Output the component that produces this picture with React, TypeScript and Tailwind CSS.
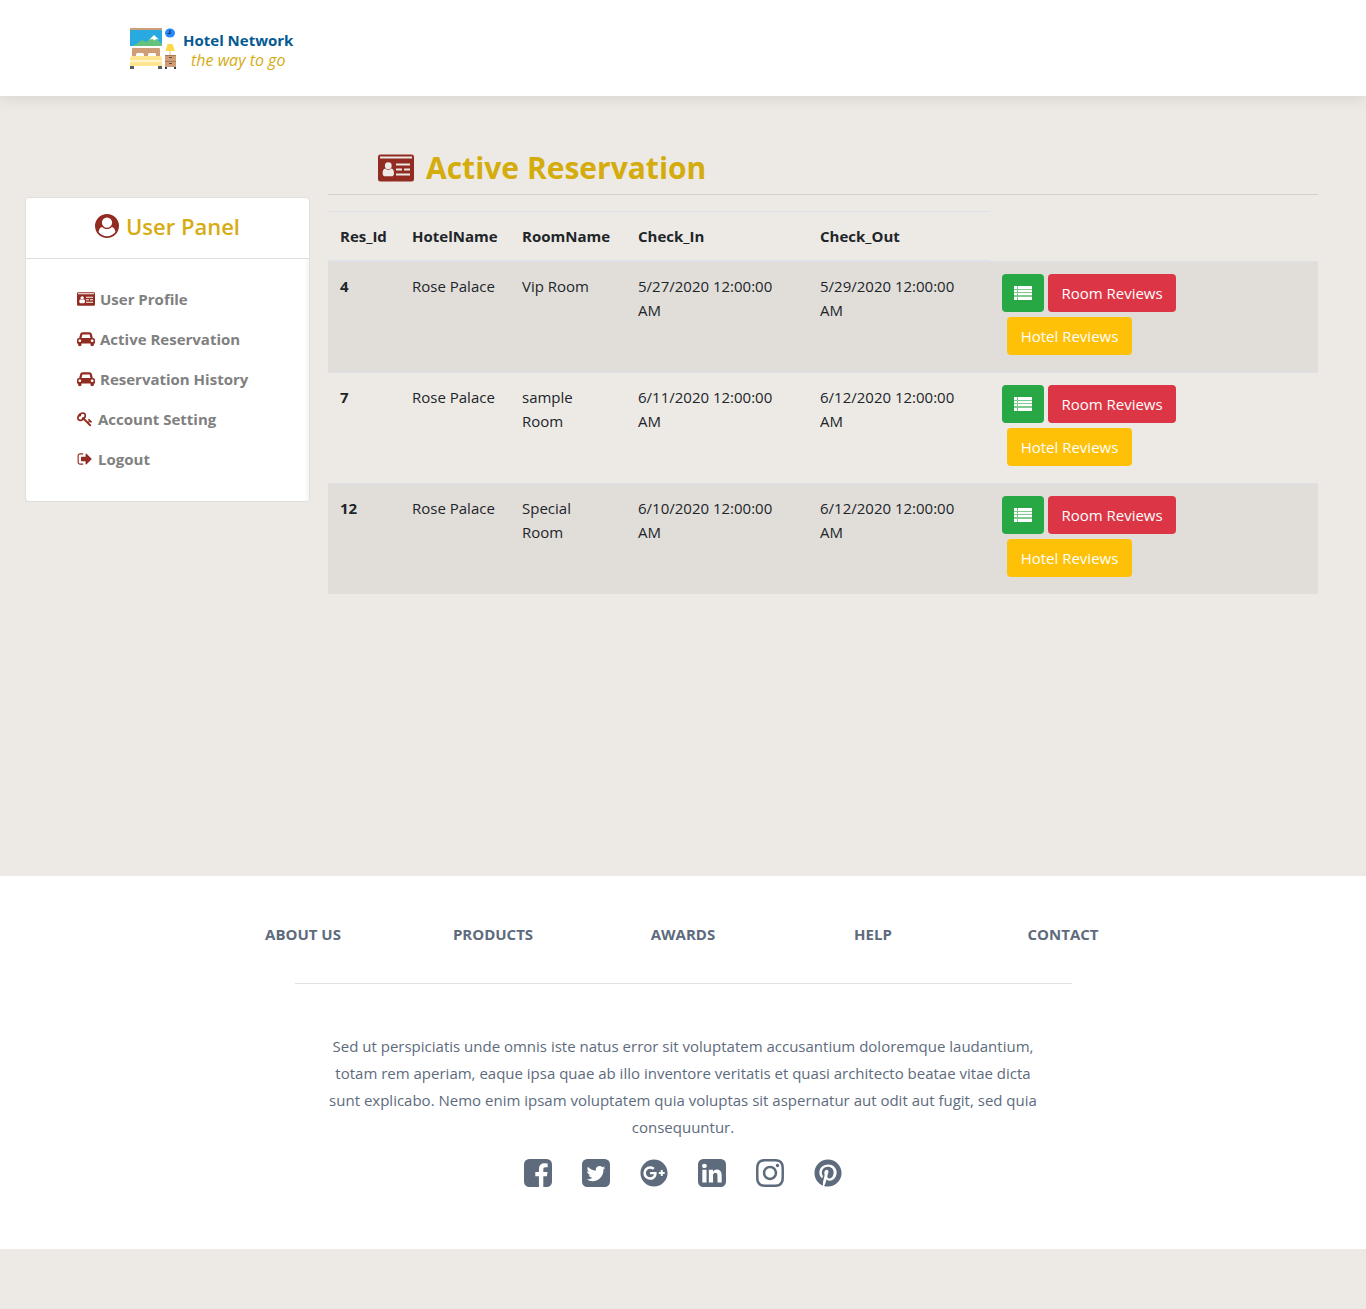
import React from 'react';
import { FaGooglePlus, FaInstagram, FaPinterest } from 'react-icons/fa';

type IconProps = { className?: string };

const Glyph = ({ box, d, className }: IconProps & { box: string; d: string }) => (
  <svg viewBox={box} fill="currentColor" className={className} aria-hidden="true">
    <path d={d} />
  </svg>
);

const CarIcon = ({ className }: IconProps) => (
  <Glyph
    className={className}
    box="0 0 2048 1792"
    d="M480 1088q0-66-47-113t-113-47-113 47-47 113 47 113 113 47 113-47 47-113zm36-320h1016l-89-357q-2-8-14-17.5t-21-9.5h-768q-9 0-21 9.5t-14 17.5zm1372 320q0-66-47-113t-113-47-113 47-47 113 47 113 113 47 113-47 47-113zm160-96v384q0 14-9 23t-23 9h-96v128q0 80-56 136t-136 56-136-56-56-136v-128h-1024v128q0 80-56 136t-136 56-136-56-56-136v-128h-96q-14 0-23-9t-9-23v-384q0-93 65.500-158.500t158.500-65.500h28l105-419q23-94 104-157.500t179-63.500h768q98 0 179 63.500t104 157.500l105 419h28q93 0 158.500 65.500t65.500 158.500z"
  />
);

const KeyIcon = ({ className }: IconProps) => (
  <Glyph
    className={className}
    box="0 0 1792 1792"
    d="M832 512q0-80-56-136t-136-56-136 56-56 136q0 42 19 83-41-19-83-19-80 0-136 56t-56 136 56 136 136 56 136-56 56-136q0-42-19-83 41 19 83 19 80 0 136-56t56-136zm851 704q0 17-49 66t-66 49q-9 0-28.500-16t-36.500-33-38.500-40-24.500-26l-96 96 220 220q28 28 28 68 0 42-39 81t-81 39q-40 0-68-28l-671-671q-176 131-365 131-163 0-265.500-102.500t-102.500-265.500q0-160 95-313t248-248 313-95q163 0 265.500 102.500t102.500 265.500q0 189-131 365l355 355 96-96q-3-3-26-24.500t-40-38.500-33-36.500-16-28.500q0-17 49-66t66-49q13 0 23 10 6 6 46 44.500t82 79.500 86.500 86 73 78 28.500 41z"
  />
);

const SignOutIcon = ({ className }: IconProps) => (
  <Glyph
    className={className}
    box="0 0 1792 1792"
    d="M704 1440q0 4 1 20t.5 26.500-3 23.500-10 19.500-20.500 6.500h-320q-119 0-203.500-84.500t-84.500-203.500v-704q0-119 84.500-203.500t203.500-84.500h320q13 0 22.500 9.500t9.500 22.500q0 4 1 20t.5 26.500-3 23.500-10 19.500-20.500 6.500h-320q-66 0-113 47t-47 113v704q0 66 47 113t113 47h312l11.500 1 11.500 3 8 5.500 7 9 2 13.500zm928-544q0 26-19 45l-544 544q-19 19-45 19t-45-19-19-45v-288h-448q-26 0-45-19t-19-45v-384q0-26 19-45t45-19h448v-288q0-26 19-45t45-19 45 19l544 544q19 19 19 45z"
  />
);

const UserCircleIcon = ({ className }: IconProps) => (
  <Glyph
    className={className}
    box="0 0 1792 1792"
    d="M1523 1339q-22-155-87.500-257.500t-184.500-118.500q-67 74-159.500 115.500t-195.500 41.500-195.500-41.500-159.500-115.500q-119 16-184.500 118.500t-87.500 257.500q106 150 271 237.500t356 87.500 356-87.500 271-237.500zm-243-699q0-159-112.500-271.500t-271.500-112.500-271.500 112.500-112.500 271.500 112.500 271.500 271.500 112.500 271.500-112.500 112.500-271.500zm512 256q0 182-71 347.500t-190.500 286-285.500 191.500-349 71q-182 0-348-71t-286-191-191-286-71-348 71-348 191-286 286-191 348-71 348 71 286 191 191 286 71 348z"
  />
);

const IdCardIcon = ({ className }: IconProps) => (
  <svg viewBox="0 0 36 28" className={className} aria-hidden="true">
    <path
      fill="currentColor"
      fillRule="evenodd"
      d="M2.500 0.500h31a2.500 2.500 0 0 1 2.500 2.500v22a2.500 2.500 0 0 1-2.500 2.500h-31a2.500 2.500 0 0 1-2.500-2.500v-22a2.500 2.500 0 0 1 2.500-2.500zM2 2.600v2h32v-2zM7.200 14.400C5.400 14.700 4.600 16.500 4.600 19.200C4.600 21.100 5.600 22.300 7 22.300H13.600C15 22.300 16 21.100 16 19.200C16 16.500 15.200 14.700 13.400 14.400A4.800 4.800 0 0 1 7.200 14.400zM10.300 8.300a3.400 3.400 0 1 0 0 6.800a3.400 3.400 0 0 0 0-6.800zM18 9.400v2h14v-2zM18 14.400v2h6v-2zM26 14.400v2h6v-2zM18 19.400v2h14v-2z"
    />
  </svg>
);

const ListIcon = ({ className }: IconProps) => (
  <svg viewBox="0 0 18 14" fill="currentColor" className={className} aria-hidden="true">
    <rect width="18" height="14" fillOpacity="0.4" />
    {[0, 4, 7, 11].map((y) => (
      <React.Fragment key={y}>
        <rect x="0" y={y} width="3" height={y === 0 || y === 11 ? 3 : 2} />
        <rect x="4" y={y} width="14" height={y === 0 || y === 11 ? 3 : 2} />
      </React.Fragment>
    ))}
  </svg>
);

const FacebookIcon = ({ className }: IconProps) => (
  <Glyph
    className={className}
    box="128 128 1536 1536"
    d="M1376 128q119 0 203.500 84.500t84.500 203.500v960q0 119-84.500 203.500t-203.500 84.500h-188v-595h199l30-232h-229v-148q0-56 23.500-84t91.500-28l122-1v-207q-63-9-178-9-136 0-217.500 80t-81.500 226v171h-200v232h200v595h-532q-119 0-203.500-84.500t-84.500-203.500v-960q0-119 84.500-203.500t203.500-84.500h960z"
  />
);

const TwitterIcon = ({ className }: IconProps) => (
  <Glyph
    className={className}
    box="128 128 1536 1536"
    d="M1408 610q-56 25-121 34 68-40 93-117-65 38-134 51-61-66-153-66-87 0-148.500 61.500t-61.500 148.500q0 29 5 48-129-7-242-65t-192-155q-29 50-29 106 0 114 91 175-47-1-100-26v2q0 75 50 133.500t123 72.500q-29 8-51 8-13 0-39-4 21 63 74.500 104t121.500 42q-116 90-261 90-26 0-50-3 148 94 322 94 112 0 210-35.500t168-95 120.500-137 75-162 24.500-168.500q0-18-1-27 63-45 105-109zm256-194v960q0 119-84.500 203.500t-203.500 84.500h-960q-119 0-203.500-84.500t-84.500-203.500v-960q0-119 84.500-203.500t203.500-84.500h960q119 0 203.500 84.500t84.500 203.500z"
  />
);

const LinkedinIcon = ({ className }: IconProps) => (
  <Glyph
    className={className}
    box="128 128 1536 1536"
    d="M365 1414h231v-694h-231v694zm246-908q-1-52-36-86t-93-34-94.500 34-36.500 86q0 51 35.500 85.500t92.500 34.500h1q59 0 95-34.500t36-85.500zm585 908h231v-398q0-154-73-233t-193-79q-136 0-209 117h2v-101h-231q3 66 0 694h231v-388q0-38 7-56 15-35 45-59.500t74-24.500q116 0 116 157v371zm468-998v960q0 119-84.500 203.500t-203.500 84.500h-960q-119 0-203.500-84.500t-84.500-203.500v-960q0-119 84.500-203.500t203.500-84.500h960q119 0 203.500 84.500t84.500 203.500z"
  />
);

const HotelLogo = () => (
  <svg viewBox="0 0 46 42" className="h-[42px] w-[46px]" aria-hidden="true">
    <rect x="0" y="0" width="32" height="2" fill="#cf9e76" />
    <rect x="0" y="2" width="32" height="16" fill="#28a9e0" />
    <path d="M3 18l9-6 4 2 7-6 9 8v2z" fill="#63c37c" />
    <path d="M19.500 11.500L24 7l5 4.500-2.500-.5-2 1.500-2-1.500z" fill="#fff" />
    <rect x="2" y="20" width="28" height="9" rx="1" fill="#cf9e76" />
    <rect x="6" y="25" width="8" height="4" rx="1.500" fill="#fff" />
    <rect x="18" y="25" width="8" height="4" rx="1.500" fill="#fff" />
    <path d="M1.500 28h29l1.500 2v2H0v-2z" fill="#ffe58f" />
    <rect x="0" y="32" width="32" height="2" fill="#fff4cc" />
    <rect x="0" y="34" width="32" height="4" fill="#ffe58f" />
    <rect x="0" y="38" width="4" height="3" fill="#5b5b63" />
    <rect x="28" y="38" width="4" height="3" fill="#5b5b63" />
    <ellipse cx="40" cy="5" rx="5" ry="4.500" fill="#2488ff" />
    <path d="M40 2v3.500h-2.500" fill="none" stroke="#24344f" strokeWidth="1.200" />
    <path d="M37.500 16h5l2.500 7H35.500z" fill="#ffd94a" />
    <rect x="39.500" y="23" width="1" height="4" fill="#d9b99c" />
    <rect x="35" y="27" width="11" height="12" fill="#cf9e76" />
    <rect x="35" y="27" width="11" height="1" fill="#a87c5a" />
    <rect x="35" y="33" width="11" height="1" fill="#a87c5a" />
    <rect x="39" y="29" width="3" height="1" fill="#6b4b3a" />
    <rect x="39" y="35" width="3" height="1" fill="#6b4b3a" />
    <rect x="35" y="39" width="2" height="2" fill="#3d3d44" />
    <rect x="44" y="39" width="2" height="2" fill="#3d3d44" />
  </svg>
);

const menu = [
  { label: 'User Profile', icon: <IdCardIcon className="h-[14px] w-[18px]" /> },
  { label: 'Active Reservation', icon: <CarIcon className="h-4 w-[18px]" /> },
  { label: 'Reservation History', icon: <CarIcon className="h-4 w-[18px]" /> },
  { label: 'Account Setting', icon: <KeyIcon className="size-4" /> },
  { label: 'Logout', icon: <SignOutIcon className="size-4" /> },
];

const reservations = [
  { id: 4, hotel: 'Rose Palace', room: 'Vip Room', checkIn: '5/27/2020 12:00:00 AM', checkOut: '5/29/2020 12:00:00 AM' },
  { id: 7, hotel: 'Rose Palace', room: 'sample Room', checkIn: '6/11/2020 12:00:00 AM', checkOut: '6/12/2020 12:00:00 AM' },
  { id: 12, hotel: 'Rose Palace', room: 'Special Room', checkIn: '6/10/2020 12:00:00 AM', checkOut: '6/12/2020 12:00:00 AM' },
];

const social = [
  { label: 'Facebook', icon: <FacebookIcon className="size-7" /> },
  { label: 'Twitter', icon: <TwitterIcon className="size-7" /> },
  { label: 'Google Plus', icon: <FaGooglePlus className="size-7" /> },
  { label: 'LinkedIn', icon: <LinkedinIcon className="size-7" /> },
  { label: 'Instagram', icon: <FaInstagram className="size-8" /> },
  { label: 'Pinterest', icon: <FaPinterest className="size-7" /> },
];

const footerLinks = ['ABOUT US', 'PRODUCTS', 'AWARDS', 'HELP', 'CONTACT'];
const columns = ['Res_Id', 'HotelName', 'RoomName', 'Check_In', 'Check_Out'];

export default function App() {
  return (
    <div className="min-h-screen bg-[#edeae5] pb-15 font-['Open_Sans',sans-serif] text-[15px] leading-6 text-[#212529]">
      <header className="relative flex h-24 items-center bg-white px-[130px] pt-[2px] shadow-[0_2px_15px_rgba(0,0,0,0.1)]">
        <a href="#home" className="flex items-center gap-[7px]">
          <HotelLogo />
          <span className="flex flex-col items-center pt-[2px] leading-5">
            <span className="font-bold text-[#045a93]">Hotel Network</span>
            <span className="text-base leading-5 text-[#d4ab12] italic">the way to go</span>
          </span>
        </a>
      </header>

      <main className="flex min-h-[780px] items-start gap-[18px] pr-12 pl-[25px]">
        <aside className="mt-[101px] w-[285px] shrink-0 overflow-hidden rounded-sm border border-[#dfdfdf] bg-white">
          <h2 className="flex h-[61px] items-center justify-center gap-[7px] border-b border-[#dfdfdf] pb-1 text-[22px] font-semibold text-[#d7ac13]">
            <UserCircleIcon className="size-6 text-[#922b21]" />
            User Panel
          </h2>
          <nav className="border-r-3 border-[#f8f8f8] pt-5 pb-[22px] pl-[51px]">
            <ul>
              {menu.map((item) => (
                <li key={item.label}>
                  <a href="#menu" className="flex h-10 items-center gap-[5px] font-bold text-[#808080]">
                    <span className="text-[#922b21]">{item.icon}</span>
                    {item.label}
                  </a>
                </li>
              ))}
            </ul>
          </nav>
        </aside>

        <section className="mt-[50px] min-w-0 flex-1">
          <h1 className="flex h-[49px] items-center gap-3 border-b border-[#d3d0cc] pb-1 pl-[50px] text-[30px] font-bold text-[#d4ac0d]">
            <IdCardIcon className="h-7 w-9 text-[#922b21]" />
            Active Reservation
          </h1>
          <table className="mt-4 w-full table-fixed border-collapse text-left">
            <colgroup>
              <col className="w-[72px]" />
              <col className="w-[110px]" />
              <col className="w-[116px]" />
              <col className="w-[182px]" />
              <col className="w-[182px]" />
              <col />
            </colgroup>
            <thead>
              <tr>
                {columns.map((name) => (
                  <th key={name} scope="col" className="border-t border-b-2 border-[#dee2e6] px-3 py-3 font-bold">
                    {name}
                  </th>
                ))}
              </tr>
            </thead>
            <tbody>
              {reservations.map((r) => (
                <tr key={r.id} className="h-[111px] border-t border-[#dee2e6] align-top odd:bg-[#e1deda]">
                  <th scope="row" className="p-3 font-bold">{r.id}</th>
                  <td className="p-3">{r.hotel}</td>
                  <td className="p-3">{r.room}</td>
                  <td className="p-3">{r.checkIn}</td>
                  <td className="p-3">{r.checkOut}</td>
                  <td className="p-3">
                    <div className="flex gap-1">
                      <button type="button" aria-label="Reservation details" className="flex h-[38px] w-[42px] items-center justify-center rounded bg-[#28a745] text-white">
                        <ListIcon className="h-[14px] w-[18px]" />
                      </button>
                      <button type="button" className="h-[38px] w-32 rounded bg-[#dc3545] text-white">Room Reviews</button>
                    </div>
                    <button type="button" className="mt-[5px] ml-[5px] block h-[38px] w-[125px] rounded bg-[#ffc107] text-white">Hotel Reviews</button>
                  </td>
                </tr>
              ))}
            </tbody>
          </table>
        </section>
      </main>

      <footer className="bg-white px-4 pt-[46px] pb-[62px] text-center text-[#5d6b7d]">
        <nav className="mx-auto grid max-w-[950px] grid-cols-5">
          {footerLinks.map((name) => (
            <a key={name} href="#footer" className="font-bold">{name}</a>
          ))}
        </nav>
        <hr className="mx-auto mt-[37px] max-w-[777px] border-[#e0e3e6]" />
        <p className="mx-auto mt-[49px] max-w-[730px] leading-[27px]">
          Sed ut perspiciatis unde omnis iste natus error sit voluptatem accusantium doloremque laudantium, totam rem aperiam,
          eaque ipsa quae ab illo inventore veritatis et quasi architecto beatae vitae dicta sunt explicabo. Nemo enim ipsam
          voluptatem quia voluptas sit aspernatur aut odit aut fugit, sed quia consequuntur.
        </p>
        <div className="mt-[18px] flex h-7 items-center justify-center gap-[30px]">
          {social.map((s) => (
            <a key={s.label} href="#social" aria-label={s.label} className="flex size-7 items-center justify-center">
              <span className="shrink-0">{s.icon}</span>
            </a>
          ))}
        </div>
      </footer>
    </div>
  );
}
